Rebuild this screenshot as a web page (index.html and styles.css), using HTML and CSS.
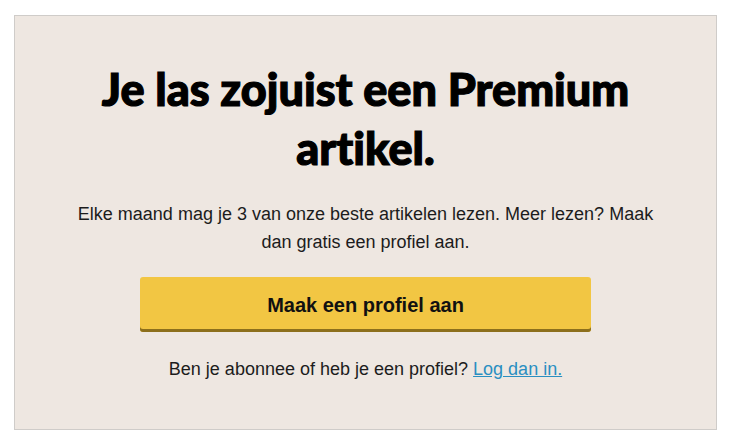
FILE: index.html
```html
<!DOCTYPE html>
<html lang="nl">
<head>
<meta charset="utf-8">
<title>Premium artikel</title>
<link rel="stylesheet" href="styles.css">
</head>
<body>
<section class="paywall">
  <h1 class="paywall-title">Je las zojuist een Premium artikel.</h1>
  <p class="paywall-text">Elke maand mag je 3 van onze beste artikelen lezen. Meer lezen? Maak dan gratis een profiel aan.</p>
  <button class="paywall-button" type="button">Maak een profiel aan</button>
  <p class="paywall-login">Ben je abonnee of heb je een profiel? <a href="#" class="paywall-link">Log dan in.</a></p>
</section>
</body>
</html>
```
FILE: styles.css
```css
html, body {
  margin: 0;
  padding: 0;
  background: #ffffff;
}

.paywall {
  box-sizing: border-box;
  width: 703px;
  height: 415px;
  margin: 15px 0 0 14px;
  border: 1px solid #cfccc9;
  background: #eee7e1;
  display: flex;
  flex-direction: column;
  align-items: center;
  padding: 44px 40px 0;
  color: #1c1c1c;
}

.paywall-title {
  margin: 0;
  width: 600px;
  text-align: center;
  font-family: "Lato", "Open Sans", sans-serif;
  font-weight: 900;
  font-size: 45px;
  line-height: 59px;
  color: #000;
  font-variant-ligatures: none;
  -webkit-text-stroke: 1.2px #000;
}

.paywall-text {
  margin: 22px 0 0;
  width: 600px;
  text-align: center;
  font-family: "Liberation Sans", Arial, sans-serif;
  font-size: 18px;
  line-height: 28px;
}

.paywall-button {
  box-sizing: border-box;
  margin-top: 21px;
  width: 451px;
  height: 55px;
  border: 0;
  border-radius: 3px;
  background: #f2c643;
  box-shadow: inset 0 -3px 0 #8c6f1c;
  padding: 2px 0 0;
  font-family: "Liberation Sans", Arial, sans-serif;
  font-weight: 700;
  font-size: 20px;
  color: #111;
  cursor: pointer;
}

.paywall-login {
  margin: 23px 0 0;
  text-align: center;
  font-family: "Liberation Sans", Arial, sans-serif;
  font-size: 18px;
  line-height: 28px;
}

.paywall-link {
  color: #2a8fc1;
  text-decoration: underline;
}
```
